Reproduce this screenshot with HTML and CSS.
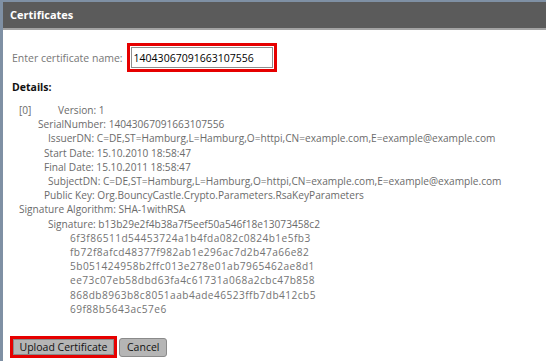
FILE: index.html
```html
<!DOCTYPE html>
<html lang="en">
<head>
    <meta charset="UTF-8">
    <title>Certificates</title>
    <link rel="stylesheet" href="styles.css">
</head>
<body>
    <div class="dialog">
        <div class="title-bar">Certificates</div>

        <div class="content">
            <div class="name-row">
                <label for="cert-name">Enter certificate name:</label>
                <span class="highlight">
                    <input id="cert-name" class="name-input" type="text" value="14043067091663107556">
                </span>
            </div>

            <h3 class="details-title">Details:</h3>

            <div class="details">
                <div class="line ind-7"><span class="index">[0]</span>Version: 1</div>
                <div class="line ind-26">SerialNumber: 14043067091663107556</div>
                <div class="line ind-36">IssuerDN: C=DE,ST=Hamburg,L=Hamburg,O=httpi,CN=example.com,E=example@example.com</div>
                <div class="line ind-32">Start Date: 15.10.2010 18:58:47</div>
                <div class="line ind-32">Final Date: 15.10.2011 18:58:47</div>
                <div class="line ind-36">SubjectDN: C=DE,ST=Hamburg,L=Hamburg,O=httpi,CN=example.com,E=example@example.com</div>
                <div class="line ind-32">Public Key: Org.BouncyCastle.Crypto.Parameters.RsaKeyParameters</div>
                <div class="line ind-7">Signature Algorithm: SHA-1withRSA</div>
                <div class="line ind-36">Signature: b13b29e2f4b38a7f5eef50a546f18e13073458c2</div>
                <div class="line hex">6f3f86511d54453724a1b4fda082c0824b1e5fb3</div>
                <div class="line hex">fb72f8afcd48377f982ab1e296ac7d2b47a66e82</div>
                <div class="line hex">5b051424958b2ffc013e278e01ab7965462ae8d1</div>
                <div class="line hex">ee73c07eb58dbd63fa4c61731a068a2cbc47b858</div>
                <div class="line hex">868db8963b8c8051aab4ade46523ffb7db412cb5</div>
                <div class="line hex">69f88b5643ac57e6</div>
            </div>

            <div class="actions">
                <span class="highlight">
                    <button class="btn btn-upload">Upload Certificate</button>
                </span>
                <button class="btn">Cancel</button>
            </div>
        </div>
    </div>
</body>
</html>
```

FILE: styles.css
```css
* {
    margin: 0;
    padding: 0;
    box-sizing: border-box;
}

html, body {
    height: 100%;
}

body {
    font-family: 'Open Sans', 'Noto Sans', sans-serif;
    font-size: 10.15px;
    background: #fff;
    color: #6b6b6b;
}

.dialog {
    height: 100%;
    border-top: 2px solid #7f90a4;
    border-left: 3px solid #7f90a4;
    background: #fff;
}

.title-bar {
    height: 28px;
    line-height: 26px;
    padding-left: 7px;
    background: #5b5b5b;
    border-bottom: 2px solid #a3a3a3;
    color: #fff;
    font-size: 11px;
    font-weight: bold;
}

.content {
    padding: 13px 0 0 9px;
}

.name-row {
    display: flex;
    align-items: center;
    gap: 4px;
}

.name-row label {
    font-size: 10.5px;
    color: #777;
}

.highlight {
    display: inline-block;
    border: 3px solid #e60000;
    padding: 1px;
    background: #fff;
}

.name-input {
    display: block;
    width: 142px;
    height: 21px;
    padding: 0 2px;
    border: 1px solid #8e8e8e;
    font-family: 'Open Sans', 'Noto Sans', sans-serif;
    font-size: 10.5px;
    color: #000;
    outline: none;
}

.details-title {
    margin-top: 8px;
    font-size: 10.5px;
    line-height: 14px;
    font-weight: bold;
    color: #111;
}

.details {
    margin-top: 9px;
}

.line {
    line-height: 14.2px;
    white-space: nowrap;
}

.index {
    display: inline-block;
    width: 39px;
}

.ind-7 { padding-left: 7px; }
.ind-26 { padding-left: 26px; }
.ind-32 { padding-left: 32px; }
.ind-36 { padding-left: 36px; }

.hex {
    padding-left: 58px;
    letter-spacing: 0.45px;
    color: #737373;
}

.actions {
    display: flex;
    align-items: center;
    gap: 2px;
    margin-top: 20px;
    margin-left: -2px;
}

.actions .highlight {
    padding: 0;
}

.btn {
    display: block;
    height: 19px;
    padding: 0 7px;
    background: #b5b5b5;
    border: 1px solid #8a8a8a;
    border-radius: 3px;
    font-family: 'Open Sans', 'Noto Sans', sans-serif;
    font-size: 10.5px;
    color: #111;
    white-space: nowrap;
    cursor: pointer;
}

.btn-upload {
    width: 101px;
    height: 16px;
    padding: 0;
    line-height: 13px;
    border-radius: 0;
}
```
